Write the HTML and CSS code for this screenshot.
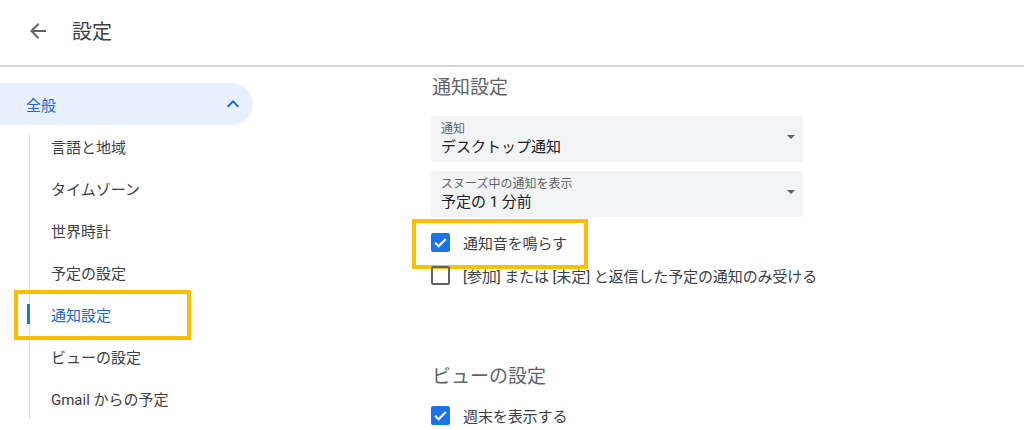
FILE: index.html
```html
<!DOCTYPE html>
<html lang="ja">
<head>
    <meta charset="UTF-8">
    <title>設定</title>
    <link rel="stylesheet" href="styles.css">
</head>
<body>
    <header class="topbar">
        <svg class="back-icon" viewBox="0 0 24 24" width="24" height="24">
            <path d="M20 11H7.83l5.59-5.59L12 4l-8 8 8 8 1.41-1.41L7.83 13H20v-2z" fill="#5f6368"/>
        </svg>
        <span class="topbar-title">設定</span>
    </header>

    <div class="layout">
        <aside class="sidebar">
            <div class="group-head">
                <span>全般</span>
                <svg class="chevron" viewBox="0 0 24 24" width="24" height="24">
                    <path d="M7.41 15.41 12 10.83l4.59 4.58L18 14l-6-6-6 6z" fill="#1967d2"/>
                </svg>
            </div>
            <ul class="nav-list">
                <li class="nav-item"><span class="mark"></span>言語と地域</li>
                <li class="nav-item"><span class="mark"></span>タイムゾーン</li>
                <li class="nav-item"><span class="mark"></span>世界時計</li>
                <li class="nav-item"><span class="mark"></span>予定の設定</li>
                <li class="nav-item active"><span class="mark"></span>通知設定<span class="highlight nav-highlight"></span></li>
                <li class="nav-item"><span class="mark"></span>ビューの設定</li>
                <li class="nav-item"><span class="mark"></span>Gmail からの予定</li>
            </ul>
        </aside>

        <main class="content">
            <h2 class="section-title">通知設定</h2>

            <div class="select-box">
                <div class="select-text">
                    <div class="select-label">通知</div>
                    <div class="select-value">デスクトップ通知</div>
                </div>
                <span class="caret"></span>
            </div>

            <div class="select-box">
                <div class="select-text">
                    <div class="select-label">スヌーズ中の通知を表示</div>
                    <div class="select-value">予定の 1 分前</div>
                </div>
                <span class="caret"></span>
            </div>

            <div class="check-row first-check">
                <span class="box checked">
                    <svg class="tick" viewBox="0 0 24 24"><path d="M3.5 12.5l5.5 5.5L20.5 6.5" fill="none" stroke="#fff" stroke-width="3.6"/></svg>
                </span>
                <span>通知音を鳴らす</span>
                <span class="highlight check-highlight"></span>
            </div>
            <div class="check-row">
                <span class="box"></span>
                <span>[参加] または [未定] と返信した予定の通知のみ受ける</span>
            </div>

            <h2 class="section-title view-title">ビューの設定</h2>
            <div class="check-row">
                <span class="box checked">
                    <svg class="tick" viewBox="0 0 24 24"><path d="M3.5 12.5l5.5 5.5L20.5 6.5" fill="none" stroke="#fff" stroke-width="3.6"/></svg>
                </span>
                <span>週末を表示する</span>
            </div>
        </main>
    </div>
</body>
</html>
```

FILE: styles.css
```css
body {
    margin: 0;
    font-family: Roboto, 'Noto Sans CJK JP', sans-serif;
    color: #3c4043;
    background: #fff;
    overflow: hidden;
}
.topbar {
    height: 65px;
    display: flex;
    align-items: center;
    padding-left: 26px;
    border-bottom: 2px solid #d6d6d6;
}
.back-icon {
    margin-top: -4px;
}
.topbar-title {
    margin-left: 22px;
    margin-top: -4px;
    font-size: 20px;
    color: #3c4043;
}
.layout {
    display: flex;
}
.sidebar {
    width: 253px;
    padding-top: 16px;
    flex-shrink: 0;
}
.group-head {
    height: 42px;
    background: #e8f0fe;
    border-radius: 0 21px 21px 0;
    display: flex;
    align-items: center;
    justify-content: space-between;
    padding: 0 8px 0 26px;
    color: #1967d2;
    font-size: 15px;
}
.nav-list {
    list-style: none;
    margin: 0 0 0 28px;
    padding: 0;
    background: linear-gradient(#dadce0, #dadce0) no-repeat 1px 9px / 1px 100%;
}
.nav-item {
    height: 42px;
    display: flex;
    align-items: center;
    font-size: 15px;
    position: relative;
}
.mark {
    width: 3px;
    height: 20px;
    margin-left: -1px;
    margin-right: 21px;
}
.nav-item.active {
    color: #1967d2;
}
.nav-item.active .mark {
    background: #1a73e8;
}
.highlight {
    position: absolute;
    border: 4px solid #fcbf00;
    box-sizing: border-box;
}
.nav-highlight {
    left: -14px;
    top: -3px;
    width: 177px;
    height: 50px;
}
.content {
    padding-left: 178px;
    padding-top: 9px;
}
.section-title {
    margin: 0 0 16px 1px;
    font-size: 19px;
    line-height: 24px;
    font-weight: 400;
    color: #5f6368;
}
.select-box {
    width: 372px;
    height: 46px;
    box-sizing: border-box;
    background: #f1f3f4;
    border-radius: 4px;
    display: flex;
    align-items: center;
    justify-content: space-between;
    padding: 0 8px 0 10px;
    margin-bottom: 9px;
}
.select-label {
    font-size: 12px;
    line-height: 15px;
    color: #5f6368;
}
.select-value {
    font-size: 15px;
    line-height: 20px;
    color: #202124;
}
.caret {
    width: 0;
    height: 0;
    border-left: 4px solid transparent;
    border-right: 4px solid transparent;
    border-top: 4px solid #5f6368;
    margin-top: -4px;
}
.check-row {
    height: 33px;
    display: flex;
    align-items: center;
    font-size: 15px;
    letter-spacing: -0.1px;
    position: relative;
}
.first-check {
    margin-top: 8px;
}
.box {
    width: 19px;
    height: 19px;
    box-sizing: border-box;
    border: 2px solid #5f6368;
    border-radius: 2px;
    margin-right: 13px;
    display: flex;
    align-items: center;
    justify-content: center;
    flex-shrink: 0;
}
.box.checked {
    background: #1a73e8;
    border-color: #1a73e8;
}
.tick {
    width: 15px;
    height: 15px;
    flex-shrink: 0;
}
.check-highlight {
    left: -19px;
    top: -7px;
    width: 176px;
    height: 50px;
}
.view-title {
    margin-top: 73px;
    margin-bottom: 10px;
}
```
